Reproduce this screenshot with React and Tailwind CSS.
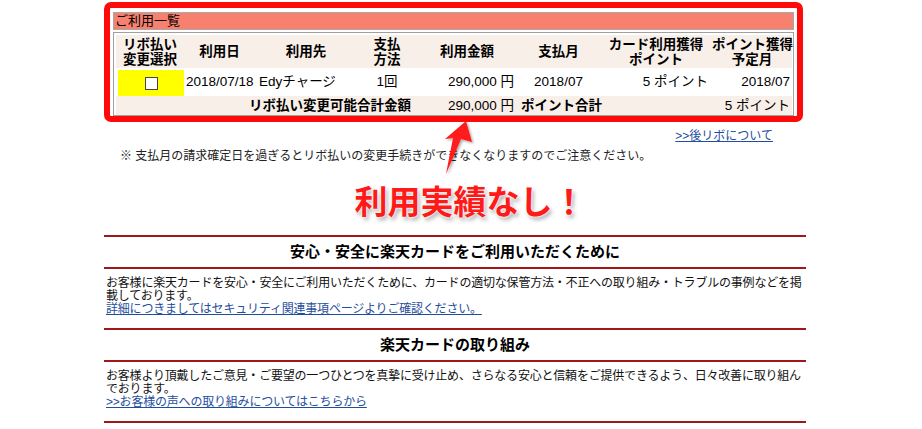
import React from "react";

const Arrow = () => (
    <svg className="absolute left-[436px] top-[116px]" width="46" height="68" viewBox="436 116 46 68">
        <defs>
            <filter id="arrowShadow" x="-50%" y="-50%" width="200%" height="200%">
                <feDropShadow dx="1.5" dy="1.5" stdDeviation="1.2" floodColor="#000" floodOpacity="0.35" />
            </filter>
        </defs>
        <polygon
            points="466,121 472,142 461,139 446,174 453,138 445,139"
            fill="#ff1a1a"
            filter="url(#arrowShadow)"
        />
    </svg>
);

const Section = ({ title, children }) => (
    <div>
        <div className="h-[2px] bg-[#a01818]" />
        <div className="h-[30px] flex items-center justify-center text-[15px] font-bold text-black">{title}</div>
        <div className="h-[2px] bg-[#a01818]" />
        <div className="pt-[8px] pb-[12px] pl-[2px] text-[12px] leading-[13px] tracking-[-0.2px] text-[#111]">
            {children}
        </div>
    </div>
);

export default function App() {
    return (
        <div className="relative w-[922px] h-[429px] overflow-hidden bg-white font-['Liberation_Sans','Noto_Sans_CJK_JP',sans-serif]">
            <div className="ml-[104px] w-[702px] pt-[2px]">
                {/* red annotation frame around the usage table */}
                <div className="w-[699px] h-[120px] border-[6px] border-[#ff0a0a] rounded-[7px] pt-[4px] pl-[3px] overflow-hidden">
                    <div className="w-[681px] h-[18px] border border-[#a8a8a8] bg-[#f7806f] text-[13px] leading-[16px] pl-[1px] text-black">
                        ご利用一覧
                    </div>
                    <div className="mt-[2px] w-[681px] border border-[#a0a0a0] p-[2px] pb-0">
                        <table className="table-fixed border-collapse w-[676px] text-[13.5px] text-black">
                            <colgroup>
                                <col className="w-[68px]" />
                                <col className="w-[71px]" />
                                <col className="w-[102px]" />
                                <col className="w-[60px]" />
                                <col className="w-[100px]" />
                                <col className="w-[83px]" />
                                <col className="w-[112px]" />
                                <col className="w-[80px]" />
                            </colgroup>
                            <thead>
                                <tr className="h-[33px] bg-[#f8efe8] font-bold leading-[15px]">
                                    <th className="p-0 text-center">リボ払い<br />変更選択</th>
                                    <th className="p-0 text-center">利用日</th>
                                    <th className="p-0 text-center">利用先</th>
                                    <th className="p-0 text-center">支払<br />方法</th>
                                    <th className="p-0 text-center">利用金額</th>
                                    <th className="p-0 text-center">支払月</th>
                                    <th className="p-0 text-center whitespace-nowrap">カード利用獲得<br />ポイント</th>
                                    <th className="p-0 text-center whitespace-nowrap">ポイント獲得<br />予定月</th>
                                </tr>
                            </thead>
                            <tbody>
                                <tr className="h-[28px] bg-white leading-[16px]">
                                    <td className="p-0 pt-[2px] pl-[2px]">
                                        <div className="h-[26px] bg-[#ffff00] flex items-center justify-center">
                                            <span className="block w-[13px] h-[13px] bg-white border border-[#444]" />
                                        </div>
                                    </td>
                                    <td className="p-0 pl-[2px] whitespace-nowrap">2018/07/18</td>
                                    <td className="p-0 pl-[4px] whitespace-nowrap">Edyチャージ</td>
                                    <td className="p-0 text-center">1回</td>
                                    <td className="p-0 pr-[3px] text-right whitespace-nowrap">290,000 円</td>
                                    <td className="p-0 text-center">2018/07</td>
                                    <td className="p-0 pr-[4px] text-right whitespace-nowrap">5 ポイント</td>
                                    <td className="p-0 pr-[2px] text-right">2018/07</td>
                                </tr>
                                <tr className="h-[19px] bg-[#f8efe8] leading-[16px]">
                                    <td colSpan={4} className="p-0 pr-[6px] text-right font-bold">リボ払い変更可能合計金額</td>
                                    <td className="p-0 pr-[3px] text-right whitespace-nowrap">290,000 円</td>
                                    <td colSpan={2} className="p-0 pl-[4px] font-bold">ポイント合計</td>
                                    <td className="p-0 pr-[2px] text-right whitespace-nowrap">5 ポイント</td>
                                </tr>
                            </tbody>
                        </table>
                    </div>
                </div>

                <div className="mt-[7px] flex justify-end pr-[33px] text-[12px] leading-[14px]">
                    <a className="text-[#1f4e9e] underline">&gt;&gt;後リボについて</a>
                </div>
                <p className="mt-[6px] pl-[16px] text-[12px] leading-[14px] text-[#222]">
                    ※ 支払月の請求確定日を過ぎるとリボ払いの変更手続きができなくなりますのでご注意ください。
                </p>

                <div className="mt-[20px] flex justify-center pl-[30px]">
                    <span className="font-['Noto_Sans_CJK_JP',sans-serif] text-[33px] leading-[35px] font-bold text-[#ff1a1a] [text-shadow:0_0_2px_#fff,0_0_3px_#fff,2px_3px_4px_rgba(0,0,0,0.35)]">
                        利用実績なし！
                    </span>
                </div>

                <div className="mt-[17px]">
                    <Section title="安心・安全に楽天カードをご利用いただくために">
                        お客様に楽天カードを安心・安全にご利用いただくために、カードの適切な保管方法・不正への取り組み・トラブルの事例などを掲載しております。
                        <br />
                        <a className="text-[#1f4e9e] underline">詳細につきましてはセキュリティ関連事項ページよりご確認ください。</a>
                    </Section>
                    <Section title="楽天カードの取り組み">
                        お客様より頂戴したご意見・ご要望の一つひとつを真摯に受け止め、さらなる安心と信頼をご提供できるよう、日々改善に取り組んでおります。
                        <br />
                        <a className="text-[#1f4e9e] underline">&gt;&gt;お客様の声への取り組みについてはこちらから</a>
                    </Section>
                    <div className="h-[2px] bg-[#a01818]" />
                </div>
            </div>
            <Arrow />
        </div>
    );
}
